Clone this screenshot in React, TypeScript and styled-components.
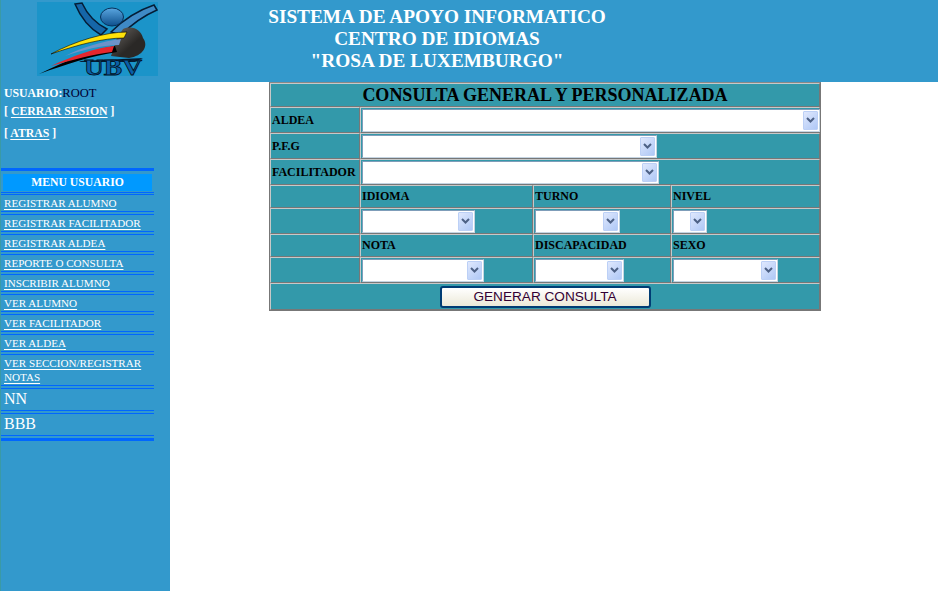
import React from 'react'
import styled, { createGlobalStyle } from 'styled-components'

const GlobalStyle = createGlobalStyle`
    html, body {
        margin: 0;
        padding: 0;
        background: #fff;
    }
    body {
        font-family: "Liberation Serif", "Times New Roman", serif;
    }
`
const Page = styled.div`
    width: 938px;
    height: 591px;
    display: grid;
    grid-template-columns: 170px 1fr;
    grid-template-rows: 82px 1fr;
    overflow: hidden;
`
const Header = styled.header`
    grid-column: 1 / 3;
    background: #3399cc;
    box-shadow: inset 1px 0 0 #3a9aa6;
    display: flex;
`
const LogoBox = styled.div`
    width: 268px;
    padding: 2px 0 0 37px;
    box-sizing: border-box;
`
const HeaderTitle = styled.h1`
    margin: 6px 0 0;
    width: 338px;
    font-size: 19.3px;
    line-height: 22px;
    font-weight: bold;
    color: #fff;
    text-align: center;
    white-space: nowrap;
`
const Sidebar = styled.aside`
    background: #3399cc;
    box-shadow: inset 1px 0 0 #3a9aa6;
    padding: 3px 0 0 1px;
    color: #fff;
`
const UserLine = styled.div<{ $gap: number }>`
    padding-left: 3px;
    font-size: 11.8px;
    font-weight: bold;
    line-height: 16px;
    margin-bottom: ${p => p.$gap}px;
`
const RootName = styled.span`
    font-size: 12.5px;
    font-weight: normal;
    color: #000033;
`
const WhiteLink = styled.a`
    color: #fff;
    text-decoration: underline;
    text-underline-offset: 2px;
`
const Menu = styled.nav`
    width: 153px;
    margin-top: 27px;
    border-top: 3px solid #0066ff;
`
const MenuTitle = styled.div`
    margin: 3px 2px 0;
    height: 17px;
    background: #0099ff;
    font-size: 11.7px;
    font-weight: bold;
    line-height: 17px;
    text-align: center;
`
const TitleRule = styled.div`
    height: 1px;
    margin: 1px 0 1px;
    background: #0066ff;
`
const MenuItem = styled.div<{ $big?: boolean }>`
    border-top: 1px solid #0066ff;
    border-bottom: 1px solid #0066ff;
    margin-bottom: 2px;
    padding: ${p => p.$big ? '0 3px 1px' : '1px 3px'};
    font-size: ${p => p.$big ? '16px' : '11.1px'};
    line-height: ${p => p.$big ? '20px' : '14px'};
`
const MenuEnd = styled.div`
    height: 3px;
    background: #0066ff;
`
const Main = styled.main`
    background: #fff;
    padding-left: 99px;
`
const Table = styled.table`
    width: 552px;
    border-collapse: separate;
    border-spacing: 0;
    border: 1px solid #777;
    border-top: 1px solid #888;
    background: #3399aa;
    table-layout: fixed;
    color: #000;
`
const Cell = styled.td<{ $h: number }>`
    height: ${p => p.$h}px;
    padding: 0 1px;
    box-sizing: border-box;
    border-top: 1px solid #c8c8c8;
    border-left: 1px solid #c8c8c8;
    border-right: 1px solid #777;
    border-bottom: 1px solid #777;
    font-size: 12px;
    font-weight: bold;
    vertical-align: middle;
`
const TitleCell = styled(Cell)`
    font-size: 18px;
    text-align: center;
`
const ButtonCell = styled(Cell)`
    text-align: center;
`
const SelectBox = styled.div<{ $w: number }>`
    width: ${p => p.$w}px;
    height: 23px;
    box-sizing: border-box;
    background: #fff;
    border: 1px solid #7f9db9;
    border-right-color: #c4d4e2;
    border-bottom-color: #c4d4e2;
    display: flex;
    justify-content: flex-end;
    padding: 1px;
`
const Arrow = styled.div`
    width: 15px;
    height: 19px;
    border-radius: 1px;
    background: linear-gradient(135deg, #dfe8fd, #afc8f6);
    border: 1px solid #bcd0f6;
    box-sizing: border-box;
    display: flex;
    align-items: center;
    justify-content: center;
`
const SubmitButton = styled.button`
    width: 211px;
    height: 22px;
    padding: 0;
    font-family: "Liberation Sans", Arial, sans-serif;
    font-size: 13.6px;
    color: #330033;
    background: linear-gradient(#ffffff, #ece9d8);
    border: 2px solid #003c74;
    border-radius: 3px;
    vertical-align: middle;
`

const Chevron = () => (
    <svg width="9" height="6" viewBox="0 0 9 6">
        <path d="M1 1 L4.5 4.5 L8 1" fill="none" stroke="#4d6185" strokeWidth="2" />
    </svg>
)

const Select: React.FC<{ w: number }> = ({ w }) => (
    <SelectBox $w={w}>
        <Arrow><Chevron /></Arrow>
    </SelectBox>
)

const Logo = () => (
    <svg width="121" height="74" viewBox="0 0 121 74" overflow="visible">
        <defs>
            <linearGradient id="head" x1="0" y1="0" x2="0" y2="1">
                <stop offset="0" stopColor="#5aa6e0" />
                <stop offset="1" stopColor="#0d4f8c" />
            </linearGradient>
            <linearGradient id="body" x1="0" y1="0" x2="1" y2="1">
                <stop offset="0" stopColor="#6e6a66" />
                <stop offset="0.6" stopColor="#2a2826" />
            </linearGradient>
        </defs>
        <rect width="121" height="74" fill="#1b94c9" />
        <path d="M38 2 L45 1 C50 12 58 21 70 27 L64 33 C52 26 43 14 38 2Z" fill="#1566a8" stroke="#041d36" strokeWidth="1.5" />
        <path d="M117 3 L120 8 C106 14 94 23 84 33 L74 30 C86 18 102 8 117 3Z" fill="#3f8ac6" stroke="#041d36" strokeWidth="1.5" />
        <ellipse cx="75" cy="15" rx="11.5" ry="9" fill="url(#head)" stroke="#06305a" />
        <path d="M86 27 C96 23 104 28 106 36 C112 44 106 54 92 56 L74 54 L80 36Z" fill="url(#body)" />
        <path d="M14 52 C38 39 68 30 90 30 L87 36 C66 36 40 43 14 52Z" fill="#ffe20a" stroke="#000" strokeWidth="0.6" />
        <path d="M28 54 C46 45 66 39 84 37 L82 43 C64 43 46 48 28 54Z" fill="#6d93c9" />
        <path d="M2 72 C30 58 58 47 78 44 L80 50 C54 54 30 62 2 72Z" fill="#000" />
        <path d="M14 64 C36 54 58 46 77 44 L75 50 C56 52 36 58 14 64Z" fill="#e5262e" />
        <path d="M42 59 L106 56 L98 60 L44 60Z" fill="#041d36" />
        <text x="47" y="73" fontFamily="Liberation Serif" fontSize="24" fontWeight="bold" fill="#0b5fa8" stroke="#03121f" strokeWidth="0.8" textLength="58" lengthAdjust="spacingAndGlyphs">UBV</text>
    </svg>
)

const menuItems = [
    'REGISTRAR ALUMNO', 'REGISTRAR FACILITADOR', 'REGISTRAR ALDEA', 'REPORTE O CONSULTA',
    'INSCRIBIR ALUMNO', 'VER ALUMNO', 'VER FACILITADOR', 'VER ALDEA', 'VER SECCION/REGISTRAR NOTAS',
]

const App: React.FC = () => (
    <Page>
        <GlobalStyle />
        <Header>
            <LogoBox><Logo /></LogoBox>
            <HeaderTitle>
                SISTEMA DE APOYO INFORMATICO<br />
                CENTRO DE IDIOMAS<br />
                "ROSA DE LUXEMBURGO"
            </HeaderTitle>
        </Header>
        <Sidebar>
            <UserLine $gap={2}>USUARIO:<RootName>ROOT</RootName></UserLine>
            <UserLine $gap={6}>[ <WhiteLink href="#">CERRAR SESION</WhiteLink> ]</UserLine>
            <UserLine $gap={0}>[ <WhiteLink href="#">ATRAS</WhiteLink> ]</UserLine>
            <Menu>
                <MenuTitle>MENU USUARIO</MenuTitle>
                <TitleRule />
                {menuItems.map(item => (
                    <MenuItem key={item}><WhiteLink href="#">{item}</WhiteLink></MenuItem>
                ))}
                <MenuItem $big>NN</MenuItem>
                <MenuItem $big>BBB</MenuItem>
                <MenuEnd />
            </Menu>
        </Sidebar>
        <Main>
            <Table>
                <colgroup>
                    <col style={{ width: 90 }} />
                    <col style={{ width: 173 }} />
                    <col style={{ width: 138 }} />
                    <col />
                </colgroup>
                <tbody>
                    <tr><TitleCell $h={24} colSpan={4}>CONSULTA GENERAL Y PERSONALIZADA</TitleCell></tr>
                    <tr><Cell $h={26}>ALDEA</Cell><Cell $h={26} colSpan={3}><Select w={458} /></Cell></tr>
                    <tr><Cell $h={26}>P.F.G</Cell><Cell $h={26} colSpan={3}><Select w={295} /></Cell></tr>
                    <tr><Cell $h={26}>FACILITADOR</Cell><Cell $h={26} colSpan={3}><Select w={297} /></Cell></tr>
                    <tr><Cell $h={23} /><Cell $h={23}>IDIOMA</Cell><Cell $h={23}>TURNO</Cell><Cell $h={23}>NIVEL</Cell></tr>
                    <tr><Cell $h={26} /><Cell $h={26}><Select w={113} /></Cell><Cell $h={26}><Select w={85} /></Cell><Cell $h={26}><Select w={34} /></Cell></tr>
                    <tr><Cell $h={23} /><Cell $h={23}>NOTA</Cell><Cell $h={23}>DISCAPACIDAD</Cell><Cell $h={23}>SEXO</Cell></tr>
                    <tr><Cell $h={26} /><Cell $h={26}><Select w={122} /></Cell><Cell $h={26}><Select w={89} /></Cell><Cell $h={26}><Select w={105} /></Cell></tr>
                    <tr><ButtonCell $h={27} colSpan={4}><SubmitButton>GENERAR CONSULTA</SubmitButton></ButtonCell></tr>
                </tbody>
            </Table>
        </Main>
    </Page>
)
export default App
